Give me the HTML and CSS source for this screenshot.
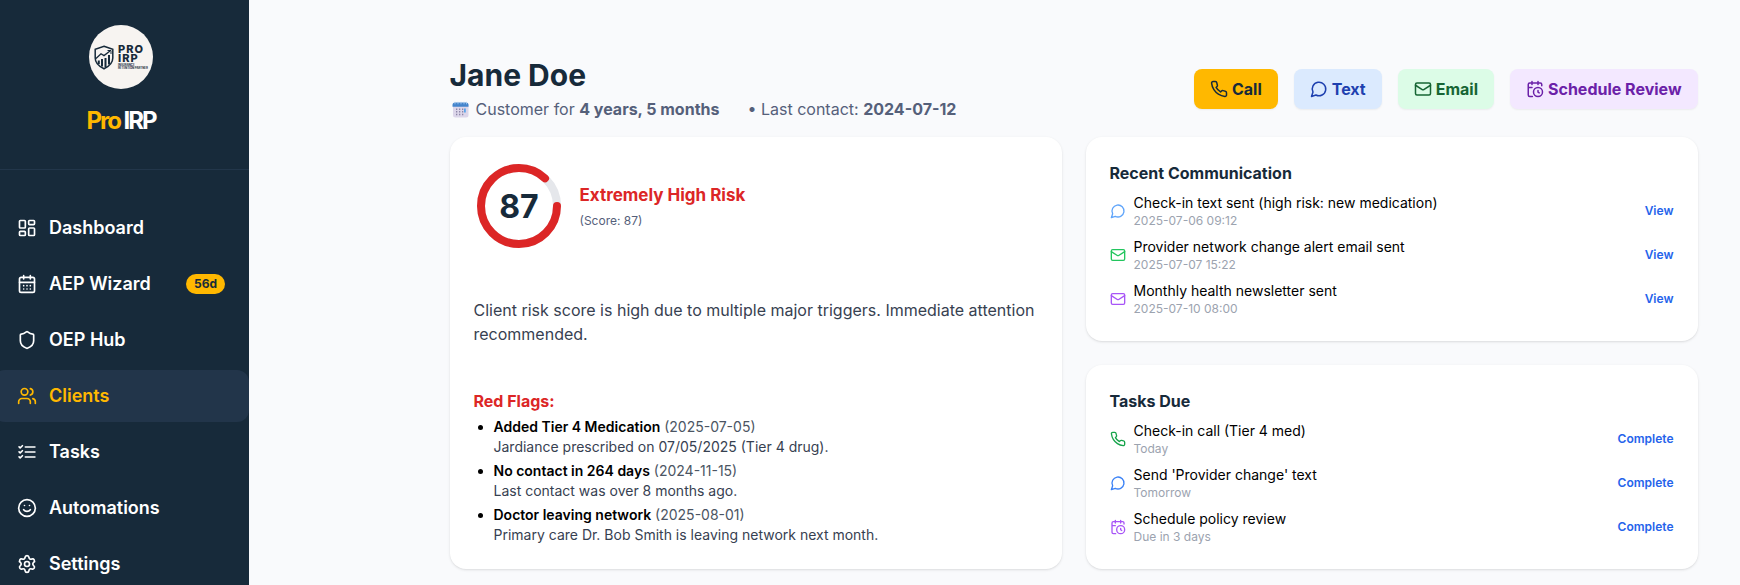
FILE: index.html
```html
<!DOCTYPE html>
<html lang="en">
<head>
<meta charset="utf-8">
<title>Pro IRP – Jane Doe</title>
<link rel="stylesheet" href="styles.css">
</head>
<body>
<svg class="defs" width="0" height="0">
  <symbol id="phone" viewBox="0 0 24 24"><path d="M22 16.92v3a2 2 0 0 1-2.18 2 19.79 19.79 0 0 1-8.63-3.07 19.5 19.5 0 0 1-6-6 19.79 19.79 0 0 1-3.07-8.67A2 2 0 0 1 4.11 2h3a2 2 0 0 1 2 1.72 12.84 12.84 0 0 0 .7 2.81 2 2 0 0 1-.45 2.11L8.09 9.91a16 16 0 0 0 6 6l1.27-1.27a2 2 0 0 1 2.11-.45 12.84 12.84 0 0 0 2.81.7A2 2 0 0 1 22 16.92z"/></symbol>
  <symbol id="message" viewBox="0 0 24 24"><path d="M7.9 20A9 9 0 1 0 4 16.1L2 22Z"/></symbol>
  <symbol id="mail" viewBox="0 0 24 24"><rect x="2" y="4" width="20" height="16" rx="2"/><path d="m22 7-8.97 5.7a1.94 1.94 0 0 1-2.06 0L2 7"/></symbol>
  <symbol id="calendar-clock" viewBox="0 0 24 24"><path d="M21 7.5V6a2 2 0 0 0-2-2H5a2 2 0 0 0-2 2v14a2 2 0 0 0 2 2h3.5M16 2v4M8 2v4M3 10h5M16 14v2.2l1.6 1"/><circle cx="16" cy="16" r="6"/></symbol>
</svg>
<div class="app">
  <aside class="sidebar">
    <div class="brand">
      <div class="logo">
        <svg class="logo-shield" viewBox="0 0 20 25"><path d="M10 1.2 18.8 4.4V13c0 5-3.8 8.4-8.8 10.8C5 21.4 1.2 18 1.2 13V4.4Z" fill="none" stroke="#172a3a" stroke-width="1.5"/><path d="M2 13.5 7 8.8 10 10.6 16 6" fill="none" stroke="#172a3a" stroke-width="1.3"/><path d="M13.5 5.5H17V9" fill="none" stroke="#172a3a"/><path d="M4.800 15.5v3.800M8 14v7.5M11.5 13v9.200M15 10v9.5" stroke="#172a3a" stroke-width="2"/></svg>
        <div class="logo-words"><span>PRO</span><span>IRP</span><small>INSURANCE</small><small>RETENTION PARTNER</small></div>
      </div>
      <div class="brand-name"><span class="gold">Pro</span> IRP</div>
    </div>
    <nav class="nav">
      <a class="nav-item"><svg class="icon" viewBox="0 0 24 24"><rect x="3" y="3" width="7" height="9" rx="1"/><rect x="14" y="3" width="7" height="5" rx="1"/><rect x="14" y="12" width="7" height="9" rx="1"/><rect x="3" y="16" width="7" height="5" rx="1"/></svg>Dashboard</a>
      <a class="nav-item"><svg class="icon" viewBox="0 0 24 24"><path d="M8 2v4M16 2v4M3 10h18M8 14h.01M12 14h.01M16 14h.01M8 18h.01M12 18h.01M16 18h.01"/><rect x="3" y="4" width="18" height="18" rx="2"/></svg>AEP Wizard<span class="badge">56d</span></a>
      <a class="nav-item"><svg class="icon" viewBox="0 0 24 24"><path d="M20 13c0 5-3.5 7.5-7.66 8.95a1 1 0 0 1-.67-.01C7.5 20.5 4 18 4 13V6a1 1 0 0 1 1-1c2 0 4.5-1.2 6.24-2.72a1.17 1.17 0 0 1 1.52 0C14.51 3.81 17 5 19 5a1 1 0 0 1 1 1z"/></svg>OEP Hub</a>
      <a class="nav-item active"><svg class="icon" viewBox="0 0 24 24"><path d="M16 21v-2a4 4 0 0 0-4-4H6a4 4 0 0 0-4 4v2M22 21v-2a4 4 0 0 0-3-3.87M16 3.13a4 4 0 0 1 0 7.75"/><circle cx="9" cy="7" r="4"/></svg>Clients</a>
      <a class="nav-item"><svg class="icon" viewBox="0 0 24 24"><path d="M2.5 5.8 3.8 7 6.5 4.5M2.5 11.8 3.8 13l2.7-2.5M2.5 17.8 3.8 19l2.7-2.5M10 6h11.5M10 12h11.5M10 18h11.5"/></svg>Tasks</a>
      <a class="nav-item"><svg class="icon" viewBox="0 0 24 24"><circle cx="12" cy="12" r="10"/><path d="M8 14s1.5 2 4 2 4-2 4-2M9 9h.01M15 9h.01"/></svg>Automations</a>
      <a class="nav-item"><svg class="icon" viewBox="0 0 24 24"><path d="M9.671 4.136a2.34 2.34 0 0 1 4.659 0 2.34 2.34 0 0 0 3.319 1.915 2.34 2.34 0 0 1 2.33 4.033 2.34 2.34 0 0 0 0 3.831 2.34 2.34 0 0 1-2.33 4.033 2.34 2.34 0 0 0-3.319 1.915 2.34 2.34 0 0 1-4.659 0 2.34 2.34 0 0 0-3.32-1.915 2.34 2.34 0 0 1-2.33-4.033 2.34 2.34 0 0 0 0-3.831A2.34 2.34 0 0 1 6.35 6.051a2.34 2.34 0 0 0 3.319-1.915"/><circle cx="12" cy="12" r="3"/></svg>Settings</a>
    </nav>
  </aside>
  <main class="main">
    <header class="header">
      <div>
        <h1 class="name">Jane Doe</h1>
        <div class="meta">
          <svg class="emoji" viewBox="0 0 17 17"><rect x="1" y="2" width="15.5" height="14.5" rx="2.5" fill="#dcd6ea"/><path d="M.5 5.800V4a2.500 2.500 0 0 1 2.500-2.500h11A2.500 2.500 0 0 1 16.500 4v1.800Z" fill="#4384cc"/><path d="M3 .8v2.500M6 .8v2.500M9 .8v2.500M12 .8v2.500M14.500 .8v2.500" stroke="#a9cdf0" stroke-width=".8"/><path d="M4 8.200h1.300M7 8.200h1.300M10 8.200h1.300M4 10.800h1.300M7 10.800h1.300M10 10.800h1.300M4 13.400h1.300M7 13.400h1.300M10 13.400h1.300" stroke="#8d86a8" stroke-width="1.500"/><path d="M12 7.500h1.800v4H12z" fill="#5aa5ea"/></svg>
          <span>Customer for <b>4 years, 5 months</b></span>
          <span class="last">• Last contact: <b>2024-07-12</b></span>
        </div>
      </div>
      <div class="actions">
        <button class="btn call"><svg class="icon"><use href="#phone"/></svg>Call</button>
        <button class="btn text"><svg class="icon"><use href="#message"/></svg>Text</button>
        <button class="btn email"><svg class="icon"><use href="#mail"/></svg>Email</button>
        <button class="btn review"><svg class="icon"><use href="#calendar-clock"/></svg>Schedule Review</button>
      </div>
    </header>
    <div class="grid">
      <section class="card">
        <div class="risk">
          <svg class="gauge" viewBox="0 0 90 90"><circle cx="45" cy="45" r="38" stroke="#e5e7eb"/><circle cx="45" cy="45" r="38" stroke="#dc2626" stroke-linecap="round" pathLength="100" stroke-dasharray="87 100"/><text x="45" y="56.5" text-anchor="middle">87</text></svg>
          <div><div class="risk-title">Extremely High Risk</div><div class="risk-score">(Score: 87)</div></div>
        </div>
        <p class="summary">Client risk score is high due to multiple major triggers. Immediate attention recommended.</p>
        <h2 class="flags-title">Red Flags:</h2>
        <ul class="flags">
          <li><b>Added Tier 4 Medication</b> <span class="date">(2025-07-05)</span><div>Jardiance prescribed on 07/05/2025 (Tier 4 drug).</div></li>
          <li><b>No contact in 264 days</b> <span class="date">(2024-11-15)</span><div>Last contact was over 8 months ago.</div></li>
          <li><b>Doctor leaving network</b> <span class="date">(2025-08-01)</span><div>Primary care Dr. Bob Smith is leaving network next month.</div></li>
        </ul>
      </section>
      <div class="side">
        <section class="card">
          <h2 class="card-title">Recent Communication</h2>
          <div class="rows">
            <div class="row"><svg class="icon blue-light"><use href="#message"/></svg><div class="body">Check-in text sent (high risk: new medication)<small>2025-07-06 09:12</small></div><a>View</a></div>
            <div class="row"><svg class="icon green"><use href="#mail"/></svg><div class="body">Provider network change alert email sent<small>2025-07-07 15:22</small></div><a>View</a></div>
            <div class="row"><svg class="icon purple"><use href="#mail"/></svg><div class="body">Monthly health newsletter sent<small>2025-07-10 08:00</small></div><a>View</a></div>
          </div>
        </section>
        <section class="card">
          <h2 class="card-title">Tasks Due</h2>
          <div class="rows">
            <div class="row"><svg class="icon green-dark"><use href="#phone"/></svg><div class="body">Check-in call (Tier 4 med)<small>Today</small></div><a>Complete</a></div>
            <div class="row"><svg class="icon blue"><use href="#message"/></svg><div class="body">Send 'Provider change' text<small>Tomorrow</small></div><a>Complete</a></div>
            <div class="row"><svg class="icon purple"><use href="#calendar-clock"/></svg><div class="body">Schedule policy review<small>Due in 3 days</small></div><a>Complete</a></div>
          </div>
        </section>
      </div>
    </div>
  </main>
</div>
</body>
</html>
```
FILE: styles.css
```css
* { box-sizing: border-box; }
body { margin: 0; background: #f9fafc; font-family: Inter, "Liberation Sans", sans-serif; font-size: 16px; line-height: 24px; color: #000; }
h1, h2, p, ul { margin: 0; padding: 0; }
.defs { display: block; }
.icon { flex: none; fill: none; stroke: currentColor; stroke-width: 2; stroke-linecap: round; stroke-linejoin: round; }
.app { display: flex; height: 585px; overflow: hidden; }

.sidebar { flex: none; width: 256px; height: 585px; margin-left: -7px; background: #172a3a; color: #fff; overflow: hidden; }
.brand { height: 170px; padding-top: 25px; display: flex; flex-direction: column; align-items: center; border-bottom: 1px solid #22364a; }
.logo { width: 64px; height: 64px; border-radius: 50%; background: #f7f4f1; display: flex; align-items: center; padding-left: 5px; gap: 4px; color: #172a3a; }
.logo-shield { width: 20px; height: 25px; }
.logo-words { display: flex; flex-direction: column; width: 30px; white-space: nowrap; }
.logo-words span { font-size: 11px; line-height: 9.5px; font-weight: 800; letter-spacing: 1px; }
.logo-words small { font-size: 2.8px; line-height: 3px; font-weight: 700; }
.brand-name { margin-top: 16px; font-size: 24px; line-height: 32px; font-weight: 700; letter-spacing: -2px; }
.gold { color: #ffb800; }
.nav { display: flex; flex-direction: column; gap: 4px; padding-top: 32px; }
.nav-item { height: 52px; flex: none; display: flex; align-items: center; gap: 12px; padding: 0 24px; border-radius: 12px; font-size: 18px; font-weight: 600; }
.nav-item .icon { width: 20px; height: 20px; }
.nav-item.active { background: #22354a; color: #ffb800; }
.badge { margin-left: auto; height: 20px; padding: 0 8px; border-radius: 10px; background: #ffb800; color: #172a3a; font-size: 12px; line-height: 20px; font-weight: 700; }

.main { width: 1248px; margin-left: 200.5px; padding-top: 57px; }
.header { display: flex; justify-content: space-between; height: 80px; }
.name { font-size: 30px; line-height: 36px; font-weight: 700; color: #172a3a; }
.meta { display: flex; align-items: center; margin-top: 4px; color: #55607a; }
.meta b { font-weight: 700; }
.emoji { width: 17px; height: 17px; margin: 0 7px 0 2px; }
.last { margin-left: 28px; }
.actions { display: flex; gap: 16px; padding-top: 12px; }
.btn { height: 40px; display: flex; align-items: center; gap: 4px; padding: 0 16px; border: 0; border-radius: 8px; font: 700 16px/24px Inter, "Liberation Sans", sans-serif; box-shadow: 0 1px 2px rgba(0,0,0,.06); }
.btn .icon { width: 18px; height: 18px; }
.call { background: #ffb800; color: #172a3a; }
.text { background: #dbeafe; color: #1e40af; }
.email { background: #dcfce7; color: #166534; }
.review { background: #f3e8ff; color: #6b21a8; }

.grid { display: grid; grid-template-columns: 612px 612px; gap: 24px; }
.side { display: flex; flex-direction: column; gap: 24px; }
.card { background: #fff; border-radius: 16px; padding: 24px; box-shadow: 0 1px 3px rgba(0,0,0,.1), 0 1px 2px -1px rgba(0,0,0,.1); }
.risk { display: flex; align-items: center; gap: 16px; }
.gauge { width: 90px; height: 90px; flex: none; }
.gauge circle { fill: none; stroke-width: 8; }
.gauge text { font-size: 32px; font-weight: 700; fill: #172a3a; }
.risk-title { font-size: 17px; line-height: 28px; font-weight: 700; color: #dc2626; }
.risk-score { margin: 4px 0 2px; font-size: 12px; line-height: 16px; color: #55607a; }
.summary { margin-top: 47px; color: #374151; }
.flags-title { margin: 43px 0 4px; font-size: 16px; line-height: 24px; font-weight: 700; color: #dc2626; }
.flags { padding-left: 20px; font-size: 14px; line-height: 20px; display: flex; flex-direction: column; gap: 4px; }
.flags b { font-weight: 600; }
.flags .date { color: #4b5563; }
.flags div { color: #374151; }

.card-title { font-size: 16px; line-height: 24px; font-weight: 700; color: #172a3a; margin-bottom: 8px; }
.rows { display: flex; flex-direction: column; gap: 8px; }
.row { display: flex; align-items: center; gap: 8px; font-size: 14px; line-height: 20px; }
.row .icon { width: 16px; height: 16px; }
.body { flex: 1; }
.body small { display: block; font-size: 12px; line-height: 16px; color: #9ca3af; }
.row a { font-size: 12px; line-height: 16px; font-weight: 600; color: #2563eb; }
.blue-light { color: #60a5fa; }
.blue { color: #3b82f6; }
.green { color: #22c55e; }
.green-dark { color: #16a34a; }
.purple { color: #a855f7; }
```
